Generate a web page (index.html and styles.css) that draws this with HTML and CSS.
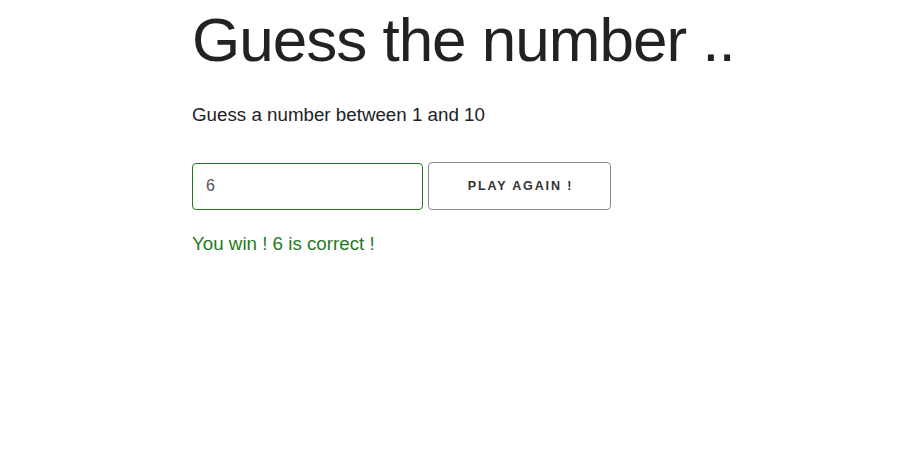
FILE: index.html
```html
<!DOCTYPE html>
<html>
<head>
<meta charset="utf-8">
<link rel="stylesheet" href="styles.css">
</head>
<body>
<main class="game">
  <h1 class="title">Guess the number ..</h1>
  <p class="hint">Guess a number between 1 and 10</p>
  <div class="controls">
    <input class="guess" type="text" value="6">
    <button class="play">Play again !</button>
  </div>
  <p class="result">You win ! 6 is correct !</p>
</main>
</body>
</html>
```
FILE: styles.css
```css
html, body {
  margin: 0;
  padding: 0;
  background: #fff;
}
body {
  font-family: "Liberation Sans", Arial, sans-serif;
  color: #222;
}
.game {
  padding-left: 192px;
}
.title {
  margin: 0;
  padding-top: 2px;
  font-size: 62px;
  font-weight: 400;
  line-height: 76px;
  letter-spacing: -1px;
  color: #222;
}
.hint {
  margin: 24px 0 0;
  font-size: 18.75px;
  line-height: 26px;
  color: #222;
}
.controls {
  display: flex;
  align-items: center;
  gap: 5px;
  margin-top: 34px;
}
.guess {
  box-sizing: border-box;
  width: 231px;
  height: 47px;
  padding: 0 13px;
  border: 1px solid #1f7a1f;
  border-radius: 4px;
  font-family: "Liberation Sans", Arial, sans-serif;
  font-size: 16px;
  color: #555;
  outline: none;
}
.play {
  box-sizing: border-box;
  width: 183px;
  height: 48px;
  padding: 0 0 0 2px;
  border: 1px solid #888;
  border-radius: 4px;
  background: #fff;
  font-family: "Liberation Sans", Arial, sans-serif;
  font-size: 12.5px;
  font-weight: 700;
  letter-spacing: 1.9px;
  text-transform: uppercase;
  color: #333;
}
.result {
  margin: 21px 0 0;
  font-size: 18.75px;
  line-height: 26px;
  color: #1f7a1f;
}
```
